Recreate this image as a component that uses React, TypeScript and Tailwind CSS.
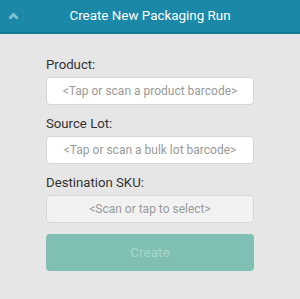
import React from "react";

function Field({ label, placeholder, muted }: { label: string; placeholder: string; muted?: boolean }) {
  return (
    <div className="flex flex-col">
      <label className="text-[13.2px] leading-[17px] text-[#333333] mb-[4px]">{label}</label>
      <div
        className={
          "h-[28px] rounded-[4px] border border-[#d6d6d6] flex items-center justify-center text-[12px] text-[#9a9a9a] " +
          (muted ? "bg-[#f2f2f2]" : "bg-white")
        }
      >
        {placeholder}
      </div>
    </div>
  );
}

export default function App() {
  return (
    <div className="w-[300px] h-[299px] bg-[#e6e6e6] overflow-hidden" style={{ fontFamily: "Roboto, 'Noto Sans', sans-serif" }}>
      <div className="h-[34px] bg-[#1a88a6] border-b-[2px] border-[#157a95] flex items-center relative">
        <svg className="absolute left-[8px] top-[12px]" width="11" height="8" viewBox="0 0 11 8">
          <path d="M1.5 6.5 L5.5 2.5 L9.5 6.5" fill="none" stroke="#7cc2d4" strokeWidth="2.8" />
        </svg>
        <h1 className="w-full text-center text-white text-[13.4px] leading-none">Create New Packaging Run</h1>
      </div>

      <div className="w-[208px] mx-auto pt-[22px] flex flex-col gap-[10px]">
        <Field label="Product:" placeholder="<Tap or scan a product barcode>" />
        <Field label="Source Lot:" placeholder="<Tap or scan a bulk lot barcode>" />
        <Field label="Destination SKU:" placeholder="<Scan or tap to select>" muted />
        <button className="mt-[1px] h-[37px] rounded-[4px] bg-[#80c0b4] text-[#a8d6cd] text-[13.5px]">
          Create
        </button>
      </div>
    </div>
  );
}
